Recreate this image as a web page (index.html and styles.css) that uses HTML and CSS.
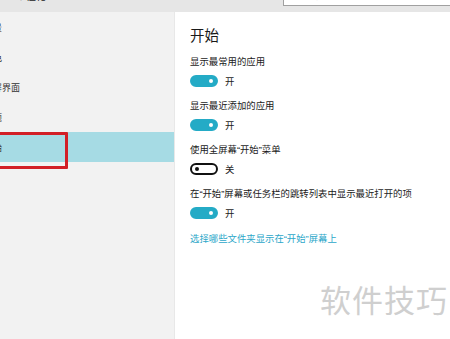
FILE: index.html
```html
<html lang="zh-CN">

<head>
    <meta charset="UTF-8">
    <title>开始</title>
    <link rel="stylesheet" href="styles.css">
</head>

<body>

    <header class="topbar">
        <div class="title">个性化</div>
        <div class="search">查找设置</div>
    </header>

    <div class="window">
        <nav class="sidebar">
            <div class="item"><span>背景</span></div>
            <div class="item"><span>颜色</span></div>
            <div class="item"><span>锁屏界面</span></div>
            <div class="item"><span>主题</span></div>
            <div class="item selected"><span>开始</span></div>
        </nav>

        <main class="pane">
            <h1>开始</h1>

            <div class="label">显示最常用的应用</div>
            <div class="switch-row">
                <span class="switch on"></span>
                <span>开</span>
            </div>

            <div class="label">显示最近添加的应用</div>
            <div class="switch-row">
                <span class="switch on"></span>
                <span>开</span>
            </div>

            <div class="label">使用全屏幕“开始”菜单</div>
            <div class="switch-row">
                <span class="switch"></span>
                <span>关</span>
            </div>

            <div class="label">在“开始”屏幕或任务栏的跳转列表中显示最近打开的项</div>
            <div class="switch-row">
                <span class="switch on"></span>
                <span>开</span>
            </div>

            <a class="link" href="#">选择哪些文件夹显示在“开始”屏幕上</a>

            <div class="watermark">软件技巧</div>
        </main>
    </div>

</body>

</html>
```

FILE: styles.css
```css
* {
    box-sizing: border-box;
    margin: 0;
    padding: 0;
}

html,
body {
    height: 100%;
}

body {
    overflow: hidden;
    /* latin font first so the quotes stay narrow like on Windows */
    font-family: "Liberation Sans", "Noto Sans CJK SC", sans-serif;
    color: #1a1a1a;
    display: flex;
    flex-direction: column;
}

.topbar {
    height: 12px;
    background-color: #e6e6e6;
    display: flex;
    justify-content: space-between;
    overflow: hidden;
}

.title {
    margin: -9px 0 0 16px;
    font-size: 10px;
    line-height: 12px;
}

.search {
    width: 167px;
    height: 20px;
    margin-top: -14px;
    padding: 4px 0 0 7px;
    background-color: white;
    border-left: 1px solid #a0a0a0;
    border-bottom: 1px solid #a0a0a0;
    color: #777;
    font-size: 9px;
    line-height: 12px;
}

.window {
    flex: 1;
    display: flex;
}

.sidebar {
    width: 175px;
    background-color: #f2f2f2;
    border-right: 1px solid #e8e8e8;
    overflow: hidden;
}

.item {
    height: 30px;
    display: flex;
    align-items: center;
    font-size: 9px;
    color: #333;
}

.item span {
    margin-left: -16px;
}

.selected {
    position: relative;
    background-color: #a6dbe4;
}

.selected::after {
    content: '';
    position: absolute;
    top: 0;
    left: -4px;
    width: 66px;
    height: 31px;
    border: 3px solid #d21f26;
    border-radius: 1px;
}

.pane {
    position: relative;
    flex: 1;
    background-color: white;
    padding: 14px 0 0 15px;
    font-size: 9.4px;
}

h1 {
    font-size: 14.5px;
    font-weight: normal;
    line-height: 20px;
}

.label {
    margin-top: 12px;
    line-height: 14px;
}

h1 + .label {
    margin-top: 9px;
}

.switch-row {
    margin-top: 6px;
    height: 12px;
    display: flex;
    align-items: center;
    gap: 7px;
}

.switch {
    position: relative;
    width: 28px;
    height: 12px;
    border-radius: 6px;
    border: 2px solid #111;
    background-color: white;
}

.switch::after {
    content: '';
    position: absolute;
    top: 2px;
    left: 3px;
    width: 4px;
    height: 4px;
    border-radius: 50%;
    background-color: #111;
}

.switch.on {
    border-color: #24abc6;
    background-color: #24abc6;
}

.switch.on::after {
    left: auto;
    right: 3px;
    background-color: white;
}

.link {
    display: block;
    margin-top: 13px;
    line-height: 14px;
    color: #2ca7c9;
    text-decoration: none;
}

.watermark {
    position: absolute;
    left: 145px;
    top: 270px;
    font-size: 31px;
    line-height: 40px;
    color: #cfcfcf;
    letter-spacing: 1px;
}
```
